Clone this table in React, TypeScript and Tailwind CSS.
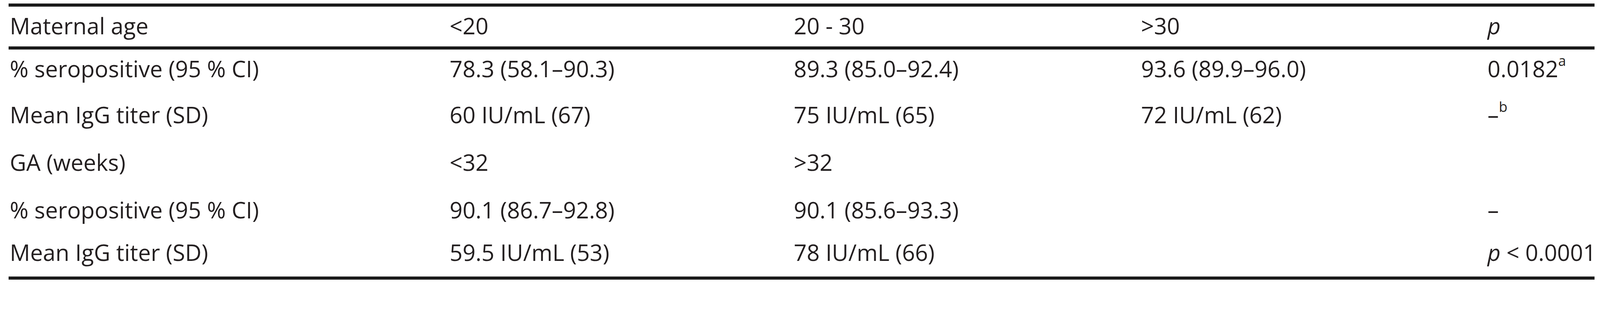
import React from 'react'

type Cell = React.ReactNode

function Sup({ children }: { children: React.ReactNode }) {
  return <span className="align-[29px] text-[36px] leading-[0]">{children}</span>
}

const header: Cell[] = ['Maternal age', '<20', '20 - 30', '>30', <i key="p">p</i>]

const body: { h: string; cells: Cell[] }[] = [
  {
    h: 'h-[118px]',
    cells: [
      '% seropositive (95 % CI)',
      '78.3 (58.1–90.3)',
      '89.3 (85.0–92.4)',
      '93.6 (89.9–96.0)',
      <>0.0182<Sup>a</Sup></>,
    ],
  },
  {
    h: 'h-[122px]',
    cells: ['Mean IgG titer (SD)', '60 IU/mL (67)', '75 IU/mL (65)', '72 IU/mL (62)', <>–<Sup>b</Sup></>],
  },
  { h: 'h-[122px]', cells: ['GA (weeks)', '<32', '>32', '', ''] },
  {
    h: 'h-[109px]',
    cells: ['% seropositive (95 % CI)', '90.1 (86.7–92.8)', '90.1 (85.6–93.3)', '', '–'],
  },
  {
    h: 'h-[111px]',
    cells: ['Mean IgG titer (SD)', '59.5 IU/mL (53)', '78 IU/mL (66)', '', <><i>p</i> &lt; 0.0001</>],
  },
]

function Row({ cells, h }: { cells: Cell[]; h: string }) {
  return (
    <div className={`grid grid-cols-[1126px_881px_889px_887px_1fr] ${h}`}>
      {cells.map((c, i) => (
        <div key={i} className="whitespace-nowrap pl-[3px] pt-[13px] leading-[72px]">
          {c}
        </div>
      ))}
    </div>
  )
}

export default function App() {
  return (
    <div className="h-[727px] w-full bg-white pl-[22px] pt-[9px] font-['Open_Sans',sans-serif] text-[58px] text-[#231f20]">
      <div className="w-[4060px]">
        <div className="h-[8px] bg-[#1a1a1a]" />
        <Row cells={header} h="h-[102px]" />
        <div className="h-[8px] bg-[#1a1a1a]" />
        {body.map((r, i) => (
          <Row key={i} cells={r.cells} h={r.h} />
        ))}
        <div className="h-[8px] bg-[#1a1a1a]" />
      </div>
    </div>
  )
}
